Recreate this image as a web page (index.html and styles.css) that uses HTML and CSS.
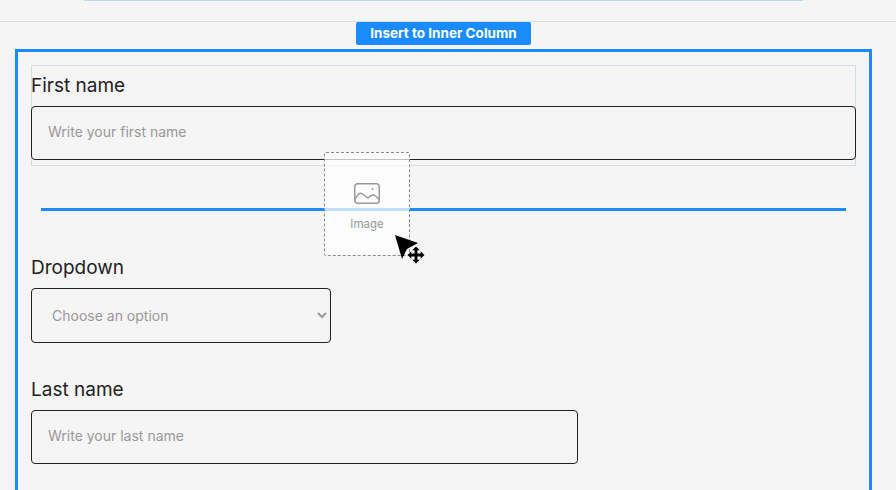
FILE: index.html
```html
<!DOCTYPE html>
<html lang="en">
<head>
<meta charset="utf-8">
<title>Form builder</title>
<link rel="stylesheet" href="styles.css">
</head>
<body>
<header class="top"><div class="strip"></div></header>
<div class="insert-row"><button class="insert" type="button">Insert to Inner Column</button></div>
<main class="column">
  <div class="selected-field">
    <label class="label">First name</label>
    <input class="text" type="text" placeholder="Write your first name">
  </div>
  <div class="drop-line"></div>
  <div class="field field-drop">
    <label class="label">Dropdown</label>
    <select class="sel"><option>Choose an option</option></select>
  </div>
  <div class="field field-last">
    <label class="label">Last name</label>
    <input class="text text-short" type="text" placeholder="Write your last name">
  </div>
</main>
<div class="ghost">
  <svg class="ghost-icon" width="28" height="24" viewBox="0 0 28 24" fill="none" stroke="#9a9a9a" stroke-width="1.5" stroke-linejoin="round" stroke-linecap="round">
    <rect x="1.75" y="2.75" width="24.5" height="19.5" rx="3"/>
    <path d="M2 18.5c1.5-3 3.5-6 5.5-6.3 2.5-.3 5 3.800 7.500 4.800 1.800-1.800 3.300-3 5-3 2 0 4.500 2.500 6 4.500"/>
    <circle cx="19.500" cy="8" r="0.9" fill="#9a9a9a" stroke="none"/>
  </svg>
  <span class="ghost-label">Image</span>
</div>
<svg class="cursor" width="36" height="36" viewBox="0 0 36 36">
  <path d="M1 1L24 9 13 15 8 25Z" fill="#000"/>
  <path d="M22 12.500l3.800 3.800h-2.400v3.300h3.300v-2.400l3.800 3.800-3.800 3.800v-2.400h-3.300v3.300h2.400l-3.800 3.800-3.800-3.800h2.400v-3.300h-3.300v2.400l-3.800-3.800 3.800-3.800v2.400h3.300v-3.300h-2.400Z" fill="#000"/>
</svg>
</body>
</html>
```
FILE: styles.css
```css
* { box-sizing: border-box; }
html, body { margin: 0; padding: 0; }
body {
  width: 896px;
  height: 490px;
  overflow: hidden;
  background: #f5f5f5;
  font-family: "Inter", "Liberation Sans", sans-serif;
  position: relative;
}
.top {
  height: 22px;
  border-bottom: 1px solid #d4dde5;
  padding-left: 84px;
}
.strip { width: 719px; height: 1px; background: #b9d9f7; }
.insert-row { height: 27px; padding-left: 356px; }
.insert {
  display: block;
  width: 175px;
  height: 23px;
  border: 0;
  padding: 0 0 2px;
  border-radius: 2px;
  background: #1a8cff;
  color: #fff;
  font: 700 13.5px "Inter", "Liberation Sans", sans-serif;
}
.column {
  margin-left: 15px;
  width: 857px;
  height: 460px;
  border: 3px solid #1a8cff;
  padding: 13px 13px 0;
}
.selected-field {
  height: 101px;
  border: 1px solid #d4dde5;
  margin-bottom: 42px;
}
.label {
  display: block;
  font-size: 19px;
  line-height: 24px;
  color: #222;
  margin: 8px 0 8px -1px;
}
.text {
  display: block;
  width: 825px;
  height: 54px;
  margin: 0 -1px;
  border: 1px solid #222;
  border-radius: 4px;
  background: transparent;
  padding: 0 16px 3px;
  font: 14px "Inter", "Liberation Sans", sans-serif;
  outline: 0;
}
.text::placeholder { color: #999; opacity: 1; }
.text-short { width: 547px; margin: 0; }
.drop-line { height: 3px; margin: 0 10px; background: #1a8cff; }
.field-drop { margin-top: 45px; }
.field .label { margin: 0 0 8px; }
.sel {
  display: block;
  width: 300px;
  height: 55px;
  border: 1px solid #222;
  border-radius: 4px;
  background: transparent;
  padding: 0 16px;
  color: #999;
  font: 14px "Inter", "Liberation Sans", sans-serif;
  outline: 0;
}
.field-last { margin-top: 35px; }
.ghost {
  position: absolute;
  left: 324px;
  top: 152px;
  width: 86px;
  height: 104px;
  border: 1px dashed #8a8a8a;
  border-radius: 2px;
  background: rgba(255, 255, 255, 0.72);
  display: flex;
  flex-direction: column;
  align-items: center;
  padding-top: 28px;
}
.ghost-icon { display: block; }
.ghost-label { margin-top: 12px; font-size: 11.5px; line-height: 14px; color: #999; }
.cursor { position: absolute; left: 394px; top: 234px; }
```
